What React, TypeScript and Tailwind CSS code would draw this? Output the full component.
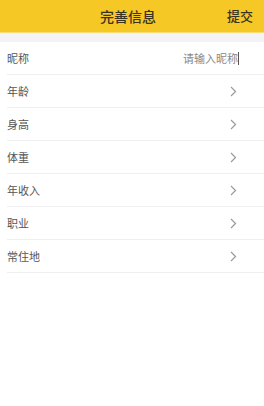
import React from 'react';

const rows = ['年龄', '身高', '体重', '年收入', '职业', '常住地'];

const Chevron = () => (
    <svg width="7" height="11" viewBox="0 0 7 11" fill="none">
        <path d="M1 1l4.5 4.5L1 10" stroke="#9a9a9a" strokeWidth="1.2" />
    </svg>
);

export default function App() {
    return (
        <div
            className="w-[264px] h-[406px] bg-white overflow-hidden"
            style={{ fontFamily: '"Noto Sans CJK SC", "Noto Sans", sans-serif' }}
        >
            {/* Header */}
            <div className="h-[33px] bg-[#f6c826] border-b border-[#f9dc76] flex items-center relative">
                <span className="flex-1 text-center text-[14px] font-medium text-[#3a3320] pr-[8px]">完善信息</span>
                <span className="absolute right-[11px] text-[13px] font-medium text-[#3a3320]">提交</span>
            </div>
            <div className="h-[9px] bg-[#f3f3f5]" />

            {/* Form */}
            <div className="pl-[7px]">
                <div className="h-[33px] flex items-center border-b border-[#efeff2] pr-[25px]">
                    <span className="flex-1 text-[11px] text-[#555]">昵称</span>
                    <span className="text-[11px] text-[#888]">请输入昵称</span>
                    <span className="w-px h-[13px] bg-[#555]" />
                </div>
                {rows.map((r) => (
                    <div key={r} className="h-[33px] flex items-center border-b border-[#efeff2] pr-[27px]">
                        <span className="flex-1 text-[11px] text-[#555]">{r}</span>
                        <Chevron />
                    </div>
                ))}
            </div>
        </div>
    );
}
